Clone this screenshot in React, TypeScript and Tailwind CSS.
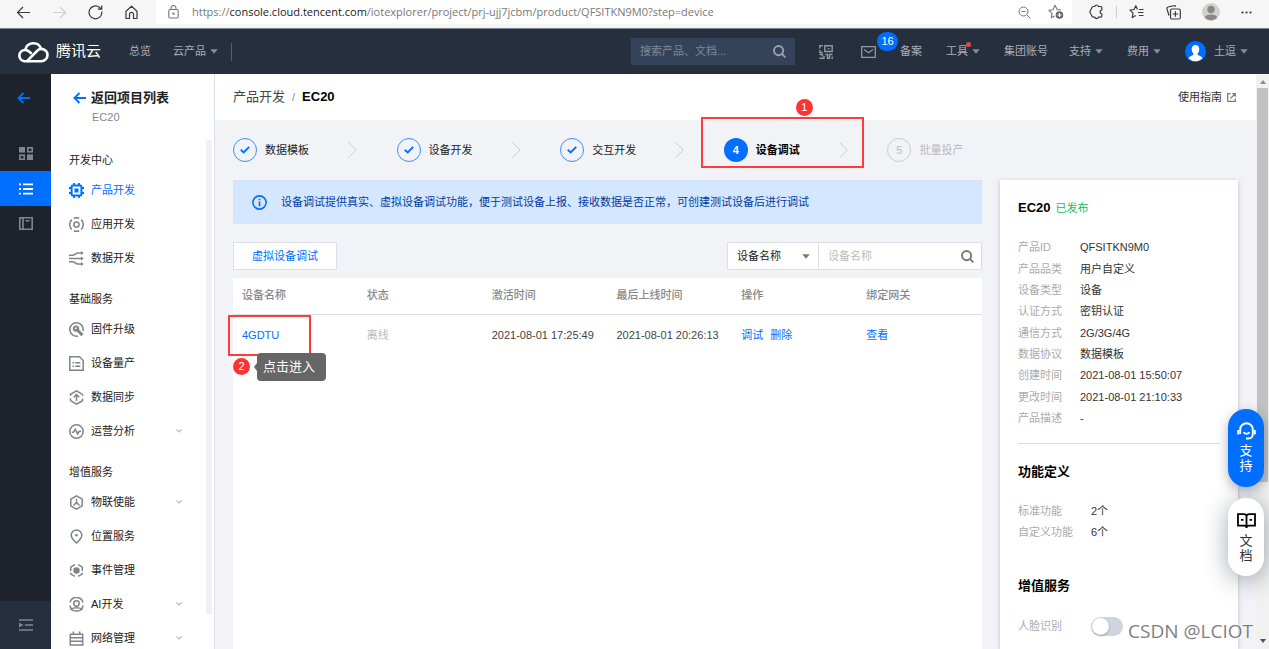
import React from "react";
import type { ReactNode } from "react";

type IconProps = { children: ReactNode; className?: string; box?: string; width?: number };

function Glyph({ children, className = "size-[15px]", box = "0 0 15 15", width = 1.5 }: IconProps) {
  return (
    <svg className={`shrink-0 ${className}`} viewBox={box} fill="none" stroke="currentColor" strokeWidth={width} aria-hidden="true">
      {children}
    </svg>
  );
}

function Caret({ className = "" }: { className?: string }) {
  return (
    <svg className={`h-[5px] w-2 shrink-0 ${className}`} viewBox="0 0 8 5" fill="currentColor" aria-hidden="true">
      <path d="M.3.3h7.400L4 4.800z" />
    </svg>
  );
}

function Magnifier({ className = "" }: { className?: string }) {
  return (
    <Glyph className={`size-[13px] ${className}`} box="0 0 13 13" width={1.9}>
      <circle cx="5.6" cy="5.6" r="4.6" />
      <path d="M8.8 8.8l3.6 3.6" />
    </Glyph>
  );
}

const icons = {
  chip: (
    <>
      <rect x="2.6" y="2.6" width="9.8" height="9.8" rx="1" strokeWidth="2" />
      <rect x="5.5" y="5.5" width="4" height="4" fill="currentColor" stroke="none" />
      <path d="M5 0v2.5M10 0v2.5M5 12.5V15M10 12.5V15M0 5h2.5M0 10h2.5M12.5 5H15M12.5 10H15" strokeWidth="1.8" />
    </>
  ),
  app: (
    <>
      <circle cx="7.5" cy="7.5" r="2.6" />
      <path d="M4.800 1.300A6.700 6.700 0 0 1 10.200 1.300M4.800 13.700A6.700 6.700 0 0 0 10.200 13.700M2.800 2.600A6.800 6.800 0 0 0 2.800 12.400M12.200 2.600A6.800 6.800 0 0 1 12.200 12.400" />
    </>
  ),
  data: (
    <>
      <path d="M0 4.200h3.500C6 4.200 6.500 2 9 2h3.500M0 7.500h12.500M0 10.800h3.500C6 10.800 6.500 13 9 13h3.500" />
      <path d="M12 0l2.800 2L12 4zM12 5.500l2.800 2L12 9.500zM12 11l2.800 2L12 15z" fill="currentColor" stroke="none" />
    </>
  ),
  firmware: (
    <>
      <path d="M9 14A6.700 6.700 0 1 1 14 9" />
      <path d="M8.500 3.700a3.300 3.300 0 0 0-4.600 4 3.300 3.300 0 0 0 4 1.900l4.300 4.700 2.300-2.300-4.500-4.200a3.300 3.300 0 0 0-1.500-4.100L7.300 5.700l.4 1.600-1.500-.2-.5-.6z" fill="currentColor" stroke="none" />
    </>
  ),
  batch: (
    <>
      <path d="M.8.8h9.700l3.700 3.700v9.700H.8z" />
      <path d="M3.500 6.700h1.500M6.300 6.700h5M3.500 10.200h1.500M6.300 10.200h5" />
    </>
  ),
  sync: (
    <>
      <path d="M1.500 6V4.300L7.500.9l6 3.400M1.500 10.700l6 3.400 6-3.400V8.500M1.500 8.200v2.500M13.500 4.300v1.500" />
      <path d="M7.500 11V5M4.700 7.300l2.800-2.700 2.800 2.700" />
    </>
  ),
  pulse: (
    <>
      <circle cx="7.500" cy="7.500" r="6.700" />
      <path d="M2.800 8.300h1.700l1.700-3 2.500 4.600 1.500-2.600h2" />
    </>
  ),
  enable: (
    <>
      <path d="M7.500.9l5.700 3.300v6.600l-5.700 3.300-5.700-3.300V4.200z" />
      <path d="M7.500 3.800v4M7.500 7.300l-3 3.200M7.500 7.300l3 3.200M5.800 8.700h3.400" strokeWidth="1.300" />
    </>
  ),
  pin: (
    <>
      <path d="M7.500 14C4 10.800 2.200 8.600 2.200 6.200a5.300 5.300 0 0 1 10.600 0c0 2.400-1.800 4.600-5.300 7.800z" />
      <circle cx="7.500" cy="6.200" r="1.300" fill="currentColor" stroke="none" />
    </>
  ),
  event: (
    <>
      <path d="M5.800 1.700L1.700 4.200V8M9.200 1.700l4.100 2.500V8M1.700 9.700v1.200l4.100 2.400M13.300 9.700v1.200l-4.100 2.400" />
      <circle cx="7.500" cy="7.500" r="3.200" fill="currentColor" stroke="none" />
    </>
  ),
  ai: (
    <>
      <path d="M1 5.500A6.700 6.700 0 0 1 14 5.500M.9 8.500a6.700 6.700 0 0 0 2.300 4M14.100 8.500a6.700 6.700 0 0 1-2.300 4" />
      <circle cx="7.500" cy="6.500" r="2.700" />
      <path d="M2 12.300c2.500-2 8.500-2 11 0-2.500 2.300-8.500 2.300-11 0z" />
    </>
  ),
  network: (
    <>
      <rect x="1.300" y="3.300" width="12.400" height="10.700" />
      <path d="M1.300 10.300h12.400M4.300.5v3M10.700.5v3M1.300 6.700h12.400" />
    </>
  ),
};

type NavItem = { label: string; icon: keyof typeof icons; more?: boolean; active?: boolean };

const sections: { title: string; items: NavItem[] }[] = [
  {
    title: "开发中心",
    items: [
      { label: "产品开发", icon: "chip", active: true },
      { label: "应用开发", icon: "app" },
      { label: "数据开发", icon: "data" },
    ],
  },
  {
    title: "基础服务",
    items: [
      { label: "固件升级", icon: "firmware" },
      { label: "设备量产", icon: "batch" },
      { label: "数据同步", icon: "sync" },
      { label: "运营分析", icon: "pulse", more: true },
    ],
  },
  {
    title: "增值服务",
    items: [
      { label: "物联使能", icon: "enable", more: true },
      { label: "位置服务", icon: "pin" },
      { label: "事件管理", icon: "event" },
      { label: "AI开发", icon: "ai", more: true },
      { label: "网络管理", icon: "network", more: true },
    ],
  },
];

function BrowserBar() {
  return (
    <div className="flex h-[29px] shrink-0 items-start border-b border-[#7c828b] bg-[#f6f6f6] text-[#3b3b3b]">
      <div className="flex h-6 w-[156px] shrink-0 items-center gap-[21px] pl-4">
        <button aria-label="后退">
          <Glyph className="size-[15px]" width={1.2}>
            <path d="M14 7.500H1.500M7 2L1.500 7.500 7 13" />
          </Glyph>
        </button>
        <button aria-label="前进" className="text-[#cfcfcf]">
          <Glyph className="size-[15px]" width={1.2}>
            <path d="M1 7.500h12.500M8 2l5.500 5.500L8 13" />
          </Glyph>
        </button>
        <button aria-label="刷新">
          <Glyph className="size-[15px]" width={1.2}>
            <path d="M13.800 6.500A6.400 6.400 0 1 1 11.600 2.500L13.500 4M13.700.5v3.700h-3.900" />
          </Glyph>
        </button>
        <button aria-label="主页">
          <Glyph className="size-[15px]" width={1.2}>
            <path d="M2 6.300L7.500 1.200 13 6.300v7.200H9.500V9.300a2 2 0 0 0-4 0v4.200H2z" strokeLinejoin="round" />
          </Glyph>
        </button>
      </div>
      <div className="flex h-6 min-w-0 flex-1 items-center rounded-b bg-white pr-2 pl-3 text-[#777]">
        <Glyph className="h-[14px] w-[11px]" box="0 0 11 14" width={1.1}>
          <rect x=".8" y="4.500" width="9.400" height="8.500" rx="1.200" />
          <path d="M3 4.500V3a2.500 2.500 0 0 1 5 0v1.500" />
          <circle cx="5.500" cy="8.700" r=".6" fill="currentColor" />
        </Glyph>
        <div className="min-w-0 flex-1 truncate pl-[13px] font-['Open_Sans','Noto_Sans',sans-serif] text-[11px]">
          https://<span className="text-[#1a1a1a]">console.cloud.tencent.com</span>
          /iotexplorer/project/prj-ujj7jcbm/product/QFSITKN9M0?step=device
        </div>
        <button aria-label="缩小" className="mr-[17px]">
          <Glyph className="size-[13px]" box="0 0 13 13" width={1}>
            <circle cx="5.500" cy="5.500" r="4.500" />
            <path d="M9 9l3.500 3.500M3.500 5.500h4" />
          </Glyph>
        </button>
        <button aria-label="收藏">
          <Glyph className="size-4" box="0 0 16 16" width={1.1}>
            <path d="M13 5.800H9.300L7 1.300 5 5.800.9 6.300l3.200 3-.8 4.400L6.500 12" strokeLinejoin="round" />
            <circle cx="11.500" cy="11" r="3.800" fill="#666" stroke="none" />
            <path d="M11.500 9v4M9.500 11h4" stroke="#fff" />
          </Glyph>
        </button>
      </div>
      <div className="flex h-6 shrink-0 items-center gap-[21px] pr-4 pl-4">
        <div className="flex items-center gap-3">
          <button aria-label="扩展">
            <Glyph className="size-4" box="0 0 16 16" width={1.2}>
              <path d="M5.300 2.500h1.500c.3-2 3.200-2 3.500 0h2.500c.8 0 1 .4 1 1v2.300c-2.300.2-2.300 3.900 0 4.100v2.300c0 .7-.3 1-1 1h-2.500c-.3 2-3.200 2-3.500 0H5.300c-.6 0-.9-.3-1.100-.7L2 8.500c-.2-.4-.2-.7 0-1.100l2.200-4.300c.2-.4.600-.6 1.100-.6z" strokeLinejoin="round" />
            </Glyph>
          </button>
          <span className="h-3 w-px bg-[#ccc]" />
          <button aria-label="收藏夹">
            <Glyph className="size-4" box="0 0 16 16" width={1.2}>
              <path d="M8.500 5.500L6.800 1.700 5 5.500l-4 .6 3 3-.8 4.500 3.500-2M10 5.500h4.500M9 8.500h5.500M10 11.500h4.500" strokeLinejoin="round" />
            </Glyph>
          </button>
        </div>
        <button aria-label="集锦">
          <Glyph className="size-[15px]" width={1.2}>
            <path d="M3 10.500L1 4a1.500 1.500 0 0 1 1-2l6-1.300a1.500 1.500 0 0 1 1.800 1" />
            <rect x="4.500" y="4" width="9.800" height="10" rx="1.500" />
            <path d="M9.400 6.300v5.400M6.700 9h5.400" />
          </Glyph>
        </button>
        <button aria-label="个人资料">
          <svg className="size-[18px]" viewBox="0 0 18 18" aria-hidden="true">
            <circle cx="9" cy="9" r="9" fill="#d3d1ce" />
            <circle cx="9" cy="6.500" r="3.700" fill="#8b8784" />
            <path d="M3 14.500c0-4 12-4 12 0-2.500 3.700-9.500 3.700-12 0z" fill="#8b8784" />
          </svg>
        </button>
        <button aria-label="更多" className="mr-px">
          <svg className="h-[3px] w-[11px]" viewBox="0 0 11 3" fill="#333" aria-hidden="true">
            <circle cx="1.500" cy="1.500" r="1.100" />
            <circle cx="5.500" cy="1.500" r="1.100" />
            <circle cx="9.500" cy="1.500" r="1.100" />
          </svg>
        </button>
      </div>
    </div>
  );
}

function TopLink({ label, caret, dot }: { label: string; caret?: boolean; dot?: boolean }) {
  return (
    <a href="#" className="relative flex items-center gap-1 whitespace-nowrap">
      {label}
      {caret && <Caret className="text-[#868d97]" />}
      {dot && <span className="absolute -top-px left-5 size-[5px] rounded-full bg-[#e54545]" />}
    </a>
  );
}

function TopBar() {
  return (
    <header className="flex h-[45px] shrink-0 items-center bg-[#262f3e] pr-[21px] pl-[18px] text-[#a9b0ba]">
      <a href="#" className="flex items-center gap-[7px] text-[15px] text-white">
        <svg className="h-[23px] w-[31px]" viewBox="0 0 31 23" fill="none" stroke="currentColor" strokeWidth="2.600" aria-hidden="true">
          <path d="M9.500 21.300h13.700a6.300 6.300 0 0 0 6.300-6.300 6 6 0 0 0-10.200-4.300L9 21.100" />
          <path d="M10.500 21.300H7A5.600 5.600 0 0 1 7 10c2 0 3.400.8 4.700 2l2 1.900" />
          <path d="M7.300 9.800a8.200 8.200 0 0 1 15.700-1.200" />
        </svg>
        腾讯云
      </a>
      <nav className="flex items-center pl-7">
        <TopLink label="总览" />
        <div className="pl-[22px]">
          <TopLink label="云产品" caret />
        </div>
        <span className="ml-[13px] h-[18px] w-px bg-[#566170]" />
      </nav>
      <div className="ml-auto flex h-[27px] w-[164px] items-center bg-[#35435a] px-[9px] text-[#8a94a3]">
        <input aria-label="搜索" placeholder="搜索产品、文档..." className="min-w-0 flex-1 bg-transparent outline-none placeholder:text-[#7f8998]" />
        <Magnifier className="text-[#98a0ab]" />
      </div>
      <nav className="flex items-center gap-[21px] pl-6">
        <div className="flex items-center gap-6">
          <button aria-label="二维码">
            <Glyph className="size-[14px] text-[#9299a3]" box="0 0 14 14" width={1.4}>
              <path d="M3.800.8H.8v2.700M.8 5v2.500h3M5.800.8h7.400v5.700H5.800zM8.800 3.600h1.800M.5 9.500h3v1.800M.5 13.200H5V11M6.500 9.500h2v3.700h2V9.500h3M13.200 11.500v2.500" />
            </Glyph>
          </button>
          <button aria-label="消息" className="relative ml-1">
            <Glyph className="h-3 w-[15px] text-[#9299a3]" box="0 0 15 12" width={1.3}>
              <path d="M.7.7h13.600v10.600H.7zM3 3.500l4.500 3.200L12 3.500" />
            </Glyph>
            <span className="absolute -top-[14px] left-4 flex h-[19px] w-[21px] items-center justify-center rounded-full bg-[#006eff] text-white">16</span>
          </button>
          <TopLink label="备案" />
          <TopLink label="工具" caret dot />
          <TopLink label="集团账号" />
        </div>
        <div className="flex items-center gap-6">
          <TopLink label="支持" caret />
          <TopLink label="费用" caret />
          <a href="#" className="flex items-center gap-2">
            <svg className="size-[21px]" viewBox="0 0 21 21" aria-hidden="true">
              <circle cx="10.500" cy="10.500" r="10.500" fill="#006eff" />
              <path d="M10.500 4c2.500 0 3.800 1.700 3.800 4.200 0 1.900-.8 3.300-1.700 4.200v1.300c1.400.9 4.400 1.500 4.900 3.900a10.500 10.500 0 0 1-14 0c.5-2.400 3.500-3 4.900-3.900v-1.300c-.9-.9-1.700-2.300-1.700-4.200C6.700 5.700 8 4 10.500 4z" fill="#fff" />
            </svg>
            <span className="flex items-center gap-1">
              土逗
              <Caret className="text-[#868d97]" />
            </span>
          </a>
        </div>
      </nav>
    </header>
  );
}

function BackArrow() {
  return (
    <Glyph className="h-3 w-[13px] text-[#006eff]" box="0 0 13 12" width={1.9}>
      <path d="M13 6H1.500M6.500 1l-5 5 5 5" />
    </Glyph>
  );
}

function Rail() {
  return (
    <nav className="flex w-[51px] shrink-0 flex-col bg-[#1e222d] text-[#80868f]">
      <a href="#" aria-label="返回" className="flex h-12 items-center pl-[17px]">
        <BackArrow />
      </a>
      <div className="mt-[14px] flex flex-col">
        <a href="#" aria-label="概览" className="flex h-[35px] items-center justify-center">
          <Glyph className="h-[13px] w-[14px]" box="0 0 14 13" width={1.6}>
            <rect x="0" y="0" width="6" height="5.600" fill="currentColor" stroke="none" />
            <rect x="8.800" y=".8" width="4.400" height="4" />
            <rect x=".8" y="8.200" width="4.400" height="4" />
            <rect x="8" y="7.400" width="6" height="5.600" fill="currentColor" stroke="none" />
          </Glyph>
        </a>
        <a href="#" aria-label="列表" className="flex h-[35px] items-center justify-center bg-[#006eff] text-white">
          <Glyph className="h-3 w-[14px]" box="0 0 14 12" width={1.8}>
            <path d="M0 1.300h2M4 1.300h10M0 6h2M4 6h10M0 10.700h2M4 10.700h10" />
          </Glyph>
        </a>
        <a href="#" aria-label="文档" className="flex h-[35px] items-center justify-center">
          <Glyph className="h-[13px] w-[14px]" box="0 0 14 13" width={1.6}>
            <path d="M.8.8h12.400v11.400H.8zM4 .8v11.400M6.500 3.800h4" />
          </Glyph>
        </a>
      </div>
      <button aria-label="展开菜单" className="mt-auto flex h-12 items-center justify-center bg-[#262f3e]">
        <Glyph className="h-3 w-[14px]" box="0 0 14 12" width={1.7}>
          <path d="M0 1h14M6 6h8M0 11h14" />
          <path d="M0 3.500L4.500 6 0 8.500z" fill="currentColor" stroke="none" />
        </Glyph>
      </button>
    </nav>
  );
}

function Sidebar() {
  return (
    <aside className="flex w-[164px] shrink-0 flex-col border-r border-[#dcdfe6] bg-white">
      <div className="h-[66px] shrink-0 pt-[14px] pl-[22px]">
        <a href="#" className="flex h-5 items-center gap-[5px] text-[13px] font-bold text-[#222]">
          <BackArrow />
          返回项目列表
        </a>
        <p className="pl-[19px] leading-[18px] text-[#888]">EC20</p>
      </div>
      <div className="flex min-h-0 flex-1 overflow-hidden">
        <div className="flex flex-1 flex-col gap-[11px] pt-[7px] pl-[18px]">
          {sections.map((section) => (
            <section key={section.title}>
              <h2 className="h-[26px] leading-[26px] text-[#222]">{section.title}</h2>
              {section.items.map((item) => (
                <a
                  key={item.label}
                  href="#"
                  className={`flex h-[34px] items-center gap-[7px] pr-6 ${item.active ? "text-[#006eff]" : "text-[#222]"}`}
                >
                  <Glyph className={item.active ? "size-[15px]" : "size-[15px] text-[#808488]"}>{icons[item.icon]}</Glyph>
                  {item.label}
                  {item.more && (
                    <Glyph className="ml-auto h-1 w-[6px] text-[#bbb]" box="0 0 6 4" width={1.2}>
                      <path d="M.5.5L3 3 5.500.5" />
                    </Glyph>
                  )}
                </a>
              ))}
            </section>
          ))}
        </div>
        <div className="mr-[2px] mb-[35px] w-[6px] bg-[#f1f1f1]" />
      </div>
    </aside>
  );
}

const steps = ["数据模板", "设备开发", "交互开发", "设备调试", "批量投产"];

function NumberBadge({ value, className }: { value: number; className: string }) {
  return (
    <span className={`absolute flex size-[17px] items-center justify-center rounded-full bg-[#ff3333] text-[11px] font-normal text-white ${className}`}>
      {value}
    </span>
  );
}

function Steps() {
  return (
    <ol className="grid w-[818px] grid-cols-5 pt-[18px]">
      {steps.map((label, i) => {
        const done = i < 3;
        const current = i === 3;
        return (
          <li key={label} className="relative flex h-6 items-center">
            <span
              className={
                current
                  ? "flex size-6 items-center justify-center rounded-full bg-[#006eff] font-bold text-white"
                  : done
                    ? "flex size-6 items-center justify-center rounded-full border border-[#3d8eff] text-[#006eff]"
                    : "flex size-6 items-center justify-center rounded-full border border-[#ccc] text-[#bbb]"
              }
            >
              {done ? (
                <Glyph className="h-2 w-[10px]" box="0 0 10 8" width={1.9}>
                  <path d="M.8 3.700l2.900 2.700L9.200.9" />
                </Glyph>
              ) : (
                i + 1
              )}
            </span>
            <span className={`w-[91px] pl-2 ${current ? "font-bold text-black" : done ? "text-[#222]" : "text-[#bbb]"}`}>{label}</span>
            {i < 4 && (
              <Glyph className="h-4 w-[9px] text-[#ccc]" box="0 0 9 16" width={1}>
                <path d="M.6.5L8.200 8 .6 15.500" />
              </Glyph>
            )}
            {current && (
              <>
                <span className="absolute -top-[21px] -left-[23px] h-[51px] w-[163px] border-2 border-[#ff3b3b]" />
                <NumberBadge value={1} className="-top-[39px] left-[72px]" />
              </>
            )}
          </li>
        );
      })}
    </ol>
  );
}

const columns = ["设备名称", "状态", "激活时间", "最后上线时间", "操作", "绑定网关"];

function DevicePanel() {
  return (
    <div className="flex min-w-0 flex-1 flex-col">
      <div className="flex h-11 shrink-0 items-center gap-[14px] border border-[#cfe2ff] bg-[#d5e7ff] pl-[18px] text-[#003b9e]">
        <Glyph className="size-[15px] text-[#006eff]" width={1.6}>
          <circle cx="7.500" cy="7.500" r="6.600" />
          <path d="M7.500 6.500v4.800M7.500 3.700v1.600" strokeWidth="1.700" />
        </Glyph>
        设备调试提供真实、虚拟设备调试功能，便于测试设备上报、接收数据是否正常，可创建测试设备后进行调试
      </div>
      <div className="flex shrink-0 items-center justify-between pt-[18px] pb-2">
        <button className="h-7 border border-[#dcdfe6] bg-white px-[18px] text-[#006eff]">虚拟设备调试</button>
        <div className="flex h-7 border border-[#dcdfe6] bg-white">
          <div className="relative flex w-[91px] items-center border-r border-[#dcdfe6]">
            <select aria-label="搜索字段" className="h-full w-full appearance-none bg-transparent pl-[9px] text-[#222] outline-none">
              <option>设备名称</option>
            </select>
            <Caret className="pointer-events-none absolute right-2 text-[#777]" />
          </div>
          <div className="flex w-[162px] items-center pr-[7px] pl-[9px]">
            <input aria-label="设备名称" placeholder="设备名称" className="min-w-0 flex-1 outline-none placeholder:text-[#bbb]" />
            <Magnifier className="text-[#777]" />
          </div>
        </div>
      </div>
      <div className="flex-1 bg-white">
        <table className="w-full table-fixed text-left">
          <thead>
            <tr className="h-9 border-b border-[#ddd] text-[#888]">
              {columns.map((column) => (
                <th key={column} className="pb-px pl-[9px] font-medium">
                  {column}
                </th>
              ))}
            </tr>
          </thead>
          <tbody>
            <tr className="h-[42px] text-[#444]">
              <td className="relative pl-[9px]">
                <a href="#" className="text-[#006eff]">4GDTU</a>
                <span className="absolute top-0 -left-[5px] h-[41px] w-[83px] border-2 border-[#ff3b3b]" />
                <NumberBadge value={2} className="top-[43px] left-0" />
                <span className="absolute top-[38px] left-6 flex h-7 w-[69px] items-center rounded-sm bg-[#666] pl-[6px] text-[13px] whitespace-nowrap text-white">
                  <svg className="absolute -left-[3px] h-2 w-[3px]" viewBox="0 0 3 8" fill="#666" aria-hidden="true">
                    <path d="M3 0v8L0 4z" />
                  </svg>
                  点击进入
                </span>
              </td>
              <td className="pl-[9px] text-[#bbb]">离线</td>
              <td className="pl-[9px] whitespace-nowrap">2021-08-01 17:25:49</td>
              <td className="pl-[9px] whitespace-nowrap">2021-08-01 20:26:13</td>
              <td className="pl-[9px]">
                <span className="flex gap-[7px] text-[#006eff]">
                  <a href="#">调试</a>
                  <a href="#">删除</a>
                </span>
              </td>
              <td className="pl-[9px]">
                <a href="#" className="text-[#006eff]">查看</a>
              </td>
            </tr>
          </tbody>
        </table>
      </div>
    </div>
  );
}

const facts = [
  ["产品ID", "QFSITKN9M0"],
  ["产品品类", "用户自定义"],
  ["设备类型", "设备"],
  ["认证方式", "密钥认证"],
  ["通信方式", "2G/3G/4G"],
  ["数据协议", "数据模板"],
  ["创建时间", "2021-08-01 15:50:07"],
  ["更改时间", "2021-08-01 21:10:33"],
  ["产品描述", "-"],
];

function ProductCard() {
  return (
    <aside className="w-[238px] shrink-0 overflow-hidden bg-white px-[18px] pt-[18px] shadow-[0_1px_4px_rgba(54,58,80,0.3)]">
      <div className="flex h-5 items-center gap-[5px]">
        <h2 className="text-[13px] font-bold text-black">EC20</h2>
        <span className="text-[#0abf5b]">已发布</span>
      </div>
      <dl className="mt-[19px] grid h-48 grid-rows-9">
        {facts.map(([name, value]) => (
          <div key={name} className="flex items-center">
            <dt className="w-[62px] text-[#aaa]">{name}</dt>
            <dd className="text-[#333]">{value}</dd>
          </div>
        ))}
      </dl>
      <hr className="mt-[14px] border-t border-[#ddd]" />
      <h3 className="mt-[18px] text-[13px] leading-5 font-bold text-black">功能定义</h3>
      <dl className="mt-[19px]">
        {[
          ["标准功能", "2个"],
          ["自定义功能", "6个"],
        ].map(([name, value]) => (
          <div key={name} className="flex h-[21px] items-center">
            <dt className="w-[73px] text-[#aaa]">{name}</dt>
            <dd className="text-[#333]">{value}</dd>
          </div>
        ))}
      </dl>
      <h3 className="mt-[33px] text-[13px] leading-5 font-bold text-black">增值服务</h3>
      <label className="mt-5 flex h-5 items-center text-[#aaa]">
        <span className="w-[73px]">人脸识别</span>
        <input type="checkbox" className="peer sr-only" />
        <span className="flex h-[19px] w-8 items-center rounded-full bg-[#cfd5de] p-px peer-checked:justify-end peer-checked:bg-[#006eff]">
          <span className="size-[17px] rounded-full bg-white shadow-[0_1px_2px_rgba(0,0,0,0.3)]" />
        </span>
      </label>
    </aside>
  );
}

function FloatingHelp() {
  return (
    <div className="absolute top-[335px] right-[5px] flex flex-col gap-[11px] text-[13px] leading-[15px]">
      <button className="flex h-[78px] w-9 flex-col items-center rounded-full bg-[#006eff] pt-[13px] text-white shadow-[0_4px_12px_rgba(54,58,80,0.4)]">
        <Glyph className="mb-[3px] h-[18px] w-[19px]" box="0 0 19 18" width={1.9}>
          <path d="M3.200 12V7.500a6.300 6.300 0 0 1 12.600 0V12c0 2.500-1.500 4.500-4.500 4.500H9" />
          <path d="M1.200 8v4.500M17.800 8v4.500" />
          <path d="M6.500 10.300c1.500 2 4.500 2 6 0" strokeWidth="1.700" />
        </Glyph>
        <span>支</span>
        <span>持</span>
      </button>
      <button className="flex h-[78px] w-9 flex-col items-center rounded-full bg-white pt-[15px] text-[#333] shadow-[0_4px_24px_rgba(54,58,80,0.45)]">
        <Glyph className="mb-1 h-4 w-[19px] text-black" box="0 0 19 16" width={1.8}>
          <path d="M1 1.200h5.500c2 0 3 .8 3 2 0-1.200 1-2 3-2H18v11.500h-6c-1.500 0-2.500.5-2.500 2 0-1.500-1-2-2.500-2H1zM9.500 3v12M4 6.800h2.500M12.500 6.800H15" />
        </Glyph>
        <span>文</span>
        <span>档</span>
      </button>
    </div>
  );
}

function ScrollTrack() {
  return (
    <div className="flex w-[13px] shrink-0 flex-col items-center bg-[#f1f1f1] py-[6px]">
      <svg className="h-1 w-[6px]" viewBox="0 0 6 4" fill="#8a8a8a" aria-hidden="true">
        <path d="M0 4h6L3 0z" />
      </svg>
      <div className="mt-1 h-[70%] w-[11px] bg-[#c1c1c1]" />
      <svg className="mt-auto h-1 w-[6px]" viewBox="0 0 6 4" fill="#505050" aria-hidden="true">
        <path d="M0 0h6L3 4z" />
      </svg>
    </div>
  );
}

export default function App() {
  return (
    <div className="flex h-screen flex-col overflow-hidden font-['Liberation_Sans','Noto_Sans_CJK_SC',sans-serif] text-[11px]">
      <BrowserBar />
      <TopBar />
      <div className="relative flex min-h-0 flex-1">
        <Rail />
        <Sidebar />
        <main className="flex min-w-0 flex-1 flex-col bg-[#f2f3f7]">
          <div className="flex h-[46px] shrink-0 items-center justify-between bg-white pr-5 pl-[18px]">
            <div className="flex items-center gap-[7px] text-[13px] text-[#444]">
              <a href="#">产品开发</a>
              <span className="text-[11px] text-[#888]">/</span>
              <strong className="text-black">EC20</strong>
            </div>
            <a href="#" className="flex items-center gap-[5px] text-[#333]">
              使用指南
              <Glyph className="size-[9px] text-[#777]" box="0 0 9 9" width={1.2}>
                <path d="M3.500.7H.7v7.600h7.600V5.500M5.300.7h3v3M8.300.7L3.500 5.500" />
              </Glyph>
            </a>
          </div>
          <div className="flex min-h-0 flex-1 flex-col px-[18px]">
            <Steps />
            <div className="flex min-h-0 flex-1 gap-[18px] pt-[18px]">
              <DevicePanel />
              <ProductCard />
            </div>
          </div>
        </main>
        <ScrollTrack />
        <FloatingHelp />
        <p className="pointer-events-none absolute right-4 bottom-1 font-['Open_Sans','Noto_Sans',sans-serif] text-[19px] leading-7 font-normal text-[#808080] [text-shadow:1px_1px_1px_#fff]">
          CSDN @LCIOT
        </p>
      </div>
    </div>
  );
}
